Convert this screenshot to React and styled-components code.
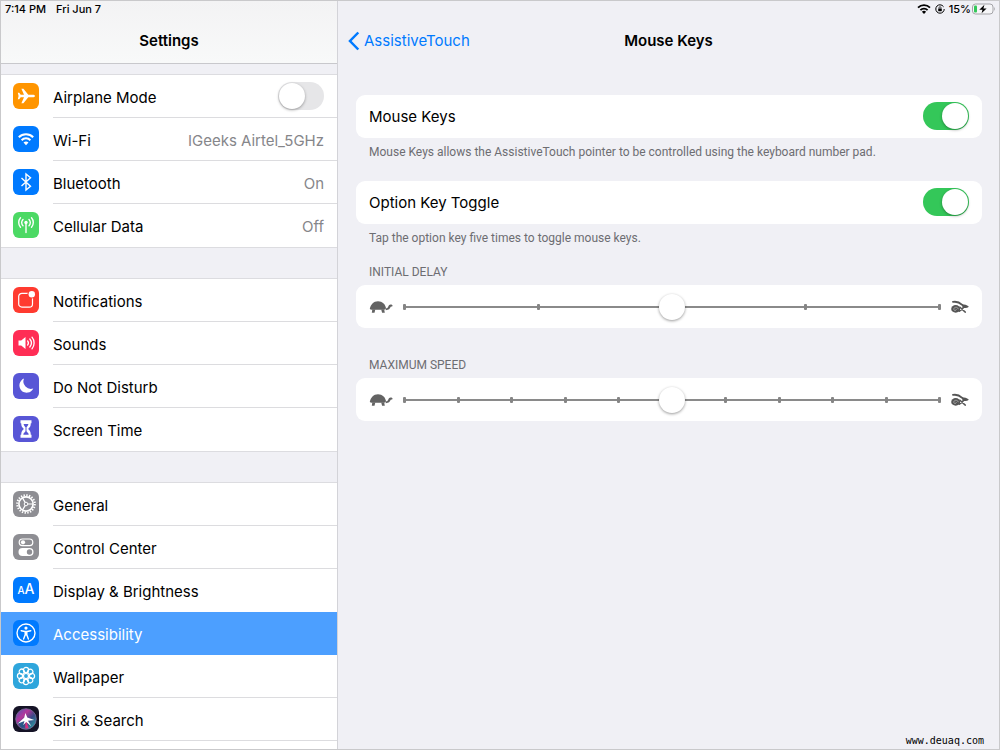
import React from "react";
import styled, { createGlobalStyle, css } from "styled-components";

const icons = {
  airplane: (
    <path
      fill="#fff"
      d="M22 13c0 .9-1.300 1.300-2.300 1.300h-4.400L10.400 20.300H8.400L11 14.300H7.700L6.200 16.300H4.800L5.600 13 4.800 9.700h1.400l1.500 2H11L8.400 5.700h2l4.900 6h4.400c1 0 2.300.4 2.300 1.300z"
    />
  ),
  wifi: (
    <g fill="none" stroke="#fff" strokeWidth="2">
      <path d="M5.800 11.300a10.200 10.200 0 0 1 14.400 0" />
      <path d="M8.600 14.200a6.200 6.200 0 0 1 8.800 0" />
      <path d="M13 19.200l-2.500-2.600a3.600 3.600 0 0 1 5 0z" fill="#fff" stroke="none" />
    </g>
  ),
  bluetooth: (
    <path
      fill="none"
      stroke="#fff"
      strokeWidth="1.400"
      d="M8.500 9l9 8.200L13 21V5l4.500 3.800-9 8.200"
    />
  ),
  cellular: (
    <g fill="none" stroke="#fff" strokeWidth="1.400" strokeLinecap="round">
      <circle cx="13" cy="10.500" r="1.700" fill="#fff" stroke="none" />
      <path d="M13 11v9.500M10 7.500a4.300 4.300 0 0 0 0 6.200M16 7.500a4.300 4.300 0 0 1 0 6.200M7.500 5.800a7.200 7.200 0 0 0 0 9.500M18.500 5.800a7.200 7.200 0 0 1 0 9.500" />
    </g>
  ),
  notifications: (
    <g>
      <rect x="5.700" y="6.300" width="13.800" height="13.800" rx="3.200" fill="none" stroke="#fff" strokeWidth="1.200" />
      <circle cx="18.800" cy="7.200" r="4.400" fill="#ff3b30" />
      <circle cx="18.800" cy="7.200" r="3.200" fill="#fff" />
    </g>
  ),
  sounds: (
    <g fill="none" stroke="#fff" strokeWidth="1.300" strokeLinecap="round">
      <path d="M5.500 10.500h2.700l4.300-3.500v12l-4.300-3.500H5.500z" fill="#fff" stroke="none" />
      <path d="M14.600 10.900a3.400 3.400 0 0 1 0 4.200M16.800 9a6.200 6.200 0 0 1 0 8M19 7.200a9 9 0 0 1 0 11.600" />
    </g>
  ),
  moon: (
    <path
      fill="#fff"
      d="M11 5.600a7.300 7.300 0 1 0 9.300 9.900A7.500 7.500 0 0 1 11 5.600z"
    />
  ),
  hourglass: (
    <g>
      <path
        fill="#fff"
        d="M7.500 4.300h11v3h-.7c0 2.900-1 4.200-2.700 5.700 1.700 1.500 2.700 2.800 2.700 5.700h.7v3H7.500v-3h.7c0-2.900 1-4.200 2.700-5.700-1.700-1.500-2.700-2.800-2.700-5.700h-.7z"
      />
      <path fill="#5856d6" d="M10.600 8h4.800c-.3 1.500-.9 2.300-1.900 3.300v4l2.100 2.500v1h-5.200v-1l2.100-2.500v-4C11.500 10.300 10.900 9.500 10.600 8z" />
    </g>
  ),
  gear: (
    <g fill="none" stroke="#fff">
      <circle cx="13" cy="13" r="8.800" strokeWidth="2" strokeDasharray="1.382 1.382" />
      <circle cx="13" cy="13" r="7.100" strokeWidth="1.700" />
      <circle cx="13" cy="13" r="1.800" strokeWidth="1" />
      <path strokeWidth="1.200" d="M14.800 13h5.200M12.100 11.400L9.500 6.900M12.100 14.600l-2.600 4.500" />
    </g>
  ),
  controls: (
    <g>
      <rect x="6.200" y="5" width="13.600" height="6.600" rx="3.300" fill="none" stroke="#fff" strokeWidth="1.200" />
      <circle cx="10" cy="8.300" r="2.100" fill="#fff" />
      <rect x="5.500" y="14" width="15" height="8" rx="4" fill="#fff" />
      <circle cx="16.500" cy="18" r="2.700" fill="#8e8e93" />
    </g>
  ),
  accessibility: (
    <g>
      <circle cx="13" cy="13" r="9" fill="none" stroke="#fff" strokeWidth="1.400" />
      <circle cx="13" cy="8.100" r="1.600" fill="#fff" />
      <path
        fill="none"
        stroke="#fff"
        strokeWidth="1.400"
        strokeLinecap="round"
        strokeLinejoin="round"
        d="M8.200 10.700l3.700.8h2.200l3.700-.8M12.200 11.500v3.200l-1.600 4.300M13.800 11.500v3.200l1.600 4.300M13 11.500v3.200"
      />
    </g>
  ),
  wallpaper: (
    <g fill="none" stroke="#fff" strokeWidth="1.200">
      <circle cx="13" cy="13" r="2.500" />
      {[0, 45, 90, 135, 180, 225, 270, 315].map((angle) => (
        <circle key={angle} cx="13" cy="7" r="2.600" transform={`rotate(${angle} 13 13)`} />
      ))}
    </g>
  ),
  siri: (
    <g>
      <defs>
        <linearGradient id="siriOrb" x1="0" y1="0" x2="1" y2="1">
          <stop offset="0" stopColor="#4a55b8" />
          <stop offset=".35" stopColor="#b5359b" />
          <stop offset=".6" stopColor="#3a4a86" />
          <stop offset="1" stopColor="#23b5a8" />
        </linearGradient>
      </defs>
      <circle cx="13" cy="13" r="10.300" fill="url(#siriOrb)" stroke="#7a6f9c" strokeWidth=".8" />
      <path fill="#1d5f86" d="M4.500 16.500l7-3.500-1.500 8.500a9 9 0 0 1-5.500-5z" opacity=".8" />
      <path fill="#d9307f" d="M12.500 13l3.200 9a9 9 0 0 1-3.500.5z" />
      <path fill="#fff" d="M4.500 17.800l6.700-6 1.200-4.800 1.900 4.600 7 2.400-6.300.8 3.300 5.500-5.100-4.300-3 3.300 1.300-4.300z" />
    </g>
  ),
};

const settingGroups = [
  [
    { id: "airplane", label: "Airplane Mode", color: "#ff9500", toggle: true },
    { id: "wifi", label: "Wi-Fi", color: "#007aff", value: "IGeeks Airtel_5GHz" },
    { id: "bluetooth", label: "Bluetooth", color: "#007aff", value: "On" },
    { id: "cellular", label: "Cellular Data", color: "#4cd964", value: "Off", noLine: true },
  ],
  [
    { id: "notifications", label: "Notifications", color: "#ff3b30" },
    { id: "sounds", label: "Sounds", color: "#ff2d55" },
    { id: "moon", label: "Do Not Disturb", color: "#5856d6" },
    { id: "hourglass", label: "Screen Time", color: "#5856d6", noLine: true },
  ],
  [
    { id: "gear", label: "General", color: "#8e8e93" },
    { id: "controls", label: "Control Center", color: "#8e8e93" },
    { id: "display", label: "Display & Brightness", color: "#007aff", noLine: true },
    { id: "accessibility", label: "Accessibility", color: "#007aff", active: true, noLine: true },
    { id: "wallpaper", label: "Wallpaper", color: "#2fa6dc" },
    { id: "siri", label: "Siri & Search", color: "#151326" },
  ],
];

const SettingIcon = ({ id, color }) => (
  <IconTile $color={color}>
    {id === "display" ? (
      <LetterIcon>
        <small>A</small>A
      </LetterIcon>
    ) : (
      <svg width="26" height="26" viewBox="0 0 26 26" aria-hidden="true">
        {icons[id]}
      </svg>
    )}
  </IconTile>
);

const SettingRow = ({ item }) => {
  const content = (
    <>
      <SettingIcon id={item.id} color={item.color} />
      <RowBody $noLine={item.noLine}>
        <RowText>{item.label}</RowText>
        {item.value && <RowText $muted>{item.value}</RowText>}
        {item.toggle && <Switch type="checkbox" role="switch" />}
      </RowBody>
    </>
  );

  if (item.toggle) {
    return <RowLabel>{content}</RowLabel>;
  }
  return (
    <RowLink href={`#${item.id}`} $active={item.active} aria-current={item.active ? "page" : undefined}>
      {content}
    </RowLink>
  );
};

const StepSlider = ({ id, label, steps }) => (
  <section>
    <SliderLabel htmlFor={id}>{label}</SliderLabel>
    <SliderCard>
      <svg width="24" height="14" viewBox="0 0 24 14" fill="#636363" aria-hidden="true">
        <path d="M.8 9C1.400 4.600 4.600 1.200 9 1.200s7.200 2.900 8 7c-.7 1-1.700 1.500-2.700 1.600H2.800C1.900 9.800 1.200 9.500.8 9z" />
        <path d="M16.600 8.600c1.500 0 2.300-.7 2.700-2 .4-1.400 1.200-2.100 2.300-2.100 1.300 0 2 .6 2.100 1.500-.4.600-1.100.8-2 .8-.7 2-2 3.200-4.900 3.400z" />
        <path d="M3.300 9.500h3l-.8 3.300H2.800zM12.200 9.500h3l.6 3.300h-2.700z" />
      </svg>
      <Track>
        <Ticks>
          {Array.from({ length: steps + 1 }, (_, i) => (
            <Tick key={i} />
          ))}
        </Ticks>
        <Range id={id} type="range" min="0" max={steps} defaultValue={steps / 2} />
      </Track>
      <svg width="18" height="14" viewBox="0 0 18 14" aria-hidden="true">
        <g fill="none" stroke="#555" strokeLinecap="round">
          <path strokeWidth="1.900" d="M2 1.900c3.200-.7 6.800.8 9.200 3" />
          <path strokeWidth="1.500" d="M8.200 11.300c2-.8 3.400-2.400 4.600-4.300M9 7.300c1.600 1.600 3.500 3.400 5.300 4.800" />
        </g>
        <path fill="#555" d="M10.800 4.200c2.400-.1 4.800.8 7 2.200-.5 1.300-2.300 1.400-5.300 1.500-1-.8-1.700-2-1.700-3.700z" />
        <ellipse cx="4.700" cy="8.900" rx="4.500" ry="3.800" fill="#555" />
        <path
          fill="none"
          stroke="#bdbdbd"
          strokeWidth=".7"
          d="M7.400 9.200C7 7.300 4.700 6.700 3.300 7.900c-1 1-.6 2.500.7 2.600 1.300 0 1.600-1.100.8-1.600"
        />
      </svg>
    </SliderCard>
  </section>
);

export default function App() {
  return (
    <>
      <GlobalStyle />
      <Screen>
        <Sidebar>
          <SidebarHeader>
            <StatusBar>
              <span>7:14 PM</span>
              <span>Fri Jun 7</span>
            </StatusBar>
            <Title>Settings</Title>
          </SidebarHeader>
          {settingGroups.map((group, index) => (
            <Group key={index}>
              {group.map((item) => (
                <li key={item.id}>
                  <SettingRow item={item} />
                </li>
              ))}
            </Group>
          ))}
        </Sidebar>

        <Main>
          <StatusBar $end>
            <svg width="14" height="10" viewBox="0 0 14 10" aria-hidden="true">
              <g fill="none" stroke="#000" strokeWidth="1.800">
                <path d="M1 3.700a8.500 8.500 0 0 1 12 0" />
                <path d="M3.400 6.100a5.100 5.100 0 0 1 7.200 0" />
              </g>
              <path d="M7 9.900L4.900 7.700a3 3 0 0 1 4.200 0z" />
            </svg>
            <svg width="10" height="10" viewBox="0 0 10 10" aria-hidden="true">
              <circle cx="5" cy="5" r="4.200" fill="none" stroke="#000" strokeWidth="1" strokeDasharray="23.400 3" />
              <rect x="3.200" y="4.500" width="3.600" height="2.700" rx=".4" />
              <path d="M4 4.600V3.700a1 1 0 0 1 2 0v.9" fill="none" stroke="#000" strokeWidth=".7" />
            </svg>
            <Charge>
              <span>15%</span>
              <svg width="24" height="12" viewBox="0 0 24 12" aria-hidden="true">
                <rect x=".5" y="1" width="20.500" height="10" rx="3" fill="#f6f6f8" stroke="#a4a4a8" />
                <path d="M22.200 4.300c1 .3 1 3.100 0 3.400z" fill="#a4a4a8" />
                <rect x="2" y="2.500" width="3" height="7" rx="1" fill="#34c759" />
                <path d="M12.400 1.800L7.300 6.700h3.200L9.600 10.300l5-4.900h-3.200z" />
              </svg>
            </Charge>
          </StatusBar>
          <NavBar>
            <BackLink href="#accessibility">
              <svg width="12" height="20" viewBox="0 0 12 20" aria-hidden="true">
                <path d="M10.300 1.500L2 10l8.300 8.500" fill="none" stroke="#007aff" strokeWidth="2.500" />
              </svg>
              AssistiveTouch
            </BackLink>
            <Title>Mouse Keys</Title>
          </NavBar>

          <Panel>
            <SwitchCard>
              <label htmlFor="mouse-keys">Mouse Keys</label>
              <Switch id="mouse-keys" type="checkbox" role="switch" defaultChecked />
            </SwitchCard>
            <Note>Mouse Keys allows the AssistiveTouch pointer to be controlled using the keyboard number pad.</Note>
            <SwitchCard>
              <label htmlFor="option-toggle">Option Key Toggle</label>
              <Switch id="option-toggle" type="checkbox" role="switch" defaultChecked />
            </SwitchCard>
            <Note $tight>Tap the option key five times to toggle mouse keys.</Note>
            <Sliders>
              <StepSlider id="initial-delay" label="INITIAL DELAY" steps={4} />
              <StepSlider id="maximum-speed" label="MAXIMUM SPEED" steps={10} />
            </Sliders>
          </Panel>
          <Watermark>www.deuaq.com</Watermark>
        </Main>
      </Screen>
    </>
  );
}

const GlobalStyle = createGlobalStyle`
  * {
    box-sizing: border-box;
  }

  body {
    margin: 0;
    background: #f0f0f5;
    color: #000;
    font-family: Inter, "Liberation Sans", sans-serif;
    font-size: 15px;
    line-height: 20px;
  }
`;

const Screen = styled.div`
  display: flex;
  min-height: 100vh;
  border: 1px solid #c9c9cb;
`;

const Sidebar = styled.nav`
  display: flex;
  flex-direction: column;
  gap: 32px;
  flex: 0 0 337px;
  border-right: 1px solid #d3d3d8;
`;

const SidebarHeader = styled.header`
  height: 63px;
  margin-bottom: -21px;
  border-bottom: 1px solid #c8c8cc;
  background: linear-gradient(#f3f3f4, #f8f9f9);
`;

const StatusBar = styled.div`
  display: flex;
  align-items: center;
  justify-content: ${(props) => (props.$end ? "flex-end" : "flex-start")};
  gap: ${(props) => (props.$end ? "4px" : "10px")};
  height: 16px;
  padding: 0 ${(props) => (props.$end ? "3px" : "4px")};
  font-size: 11px;
  font-weight: 500;
  line-height: 16px;
`;

const Charge = styled.span`
  display: flex;
  align-items: center;
  gap: 1px;
`;

const Title = styled.h1`
  margin: 0;
  padding: 14px 0;
  font-size: 15px;
  font-weight: 600;
  line-height: 20px;
  text-align: center;
`;

const Group = styled.ul`
  margin: 0;
  padding: 0;
  list-style: none;
  background: #fff;
  box-shadow: 0 -1px 0 #dcdce0, 0 1px 0 #dcdce0;

  &:last-child {
    flex: 1;
    box-shadow: 0 -1px 0 #dcdce0;
  }
`;

const rowStyle = css`
  display: flex;
  align-items: center;
  gap: 14px;
  height: 43px;
  padding-left: 12px;
`;

const RowLabel = styled.label`
  ${rowStyle}
`;

const RowLink = styled.a`
  ${rowStyle}
  color: ${(props) => (props.$active ? "#fff" : "#000")};
  background: ${(props) => (props.$active ? "#4c9fff" : "transparent")};
  text-decoration: none;
`;

const IconTile = styled.span`
  display: flex;
  align-items: center;
  justify-content: center;
  flex: none;
  width: 26px;
  height: 26px;
  margin-bottom: 2px;
  border-radius: 6px;
  background: ${(props) => props.$color};
  overflow: hidden;
`;

const LetterIcon = styled.span`
  color: #fff;
  font-size: 14px;
  font-weight: 500;
  line-height: 26px;

  small {
    font-size: 10px;
  }
`;

const RowBody = styled.span`
  display: flex;
  align-items: center;
  justify-content: space-between;
  flex: 1;
  align-self: stretch;
  padding-right: 13px;
  border-bottom: 1px solid ${(props) => (props.$noLine ? "transparent" : "#dcdcdf")};
`;

const RowText = styled.span`
  padding-top: 4px;
  color: ${(props) => (props.$muted ? "#86868a" : "inherit")};
`;

const Switch = styled.input`
  appearance: none;
  display: flex;
  flex: none;
  width: 46px;
  height: 28px;
  margin: 0;
  padding: 1px;
  border-radius: 14px;
  background: #e6e6e8;

  &::before {
    content: "";
    width: 26px;
    height: 26px;
    border-radius: 50%;
    background: #fff;
    box-shadow: 0 1px 3px rgba(0, 0, 0, 0.35);
  }

  &:checked {
    justify-content: flex-end;
    background: #34c759;
  }
`;

const Main = styled.main`
  display: flex;
  flex-direction: column;
  flex: 1;
  min-width: 0;
`;

const NavBar = styled.header`
  display: grid;
  grid-template-columns: 1fr auto 1fr;
  align-items: center;
  height: 47px;
  padding: 0 10px;
`;

const BackLink = styled.a`
  display: flex;
  align-items: center;
  gap: 4px;
  color: #007aff;
  text-decoration: none;
`;

const Panel = styled.div`
  padding: 31px 17px 0 18px;
`;

const Card = styled.div`
  display: flex;
  align-items: center;
  justify-content: space-between;
  height: 43px;
  padding: 0 13px;
  border-radius: 9px;
  background: #fff;
`;

const SwitchCard = styled(Card)`
  padding-bottom: 1px;

  label {
    padding-top: 2px;
  }
`;

const Note = styled.p`
  margin: 0;
  padding: 6px 13px ${(props) => (props.$tight ? "18px" : "21px")};
  color: #6d6d72;
  font-family: Roboto, "Liberation Sans", sans-serif;
  font-size: 12px;
  line-height: 16px;
`;

const Sliders = styled.div`
  display: flex;
  flex-direction: column;
  gap: 29px;
`;

const SliderLabel = styled.label`
  display: block;
  padding: 0 13px 5px;
  color: #6d6d72;
  font-family: Roboto, "Liberation Sans", sans-serif;
  font-size: 12px;
  line-height: 16px;
`;

const SliderCard = styled(Card)`
  gap: 10px;
`;

const Track = styled.div`
  display: grid;
  flex: 1;
  align-items: center;

  > * {
    grid-area: 1 / 1;
  }
`;

const Ticks = styled.div`
  display: flex;
  align-items: center;
  justify-content: space-between;
  height: 6px;
  background: linear-gradient(#8a8a8a, #8a8a8a) center / 100% 2px no-repeat;
`;

const Tick = styled.span`
  width: 3px;
  height: 6px;
  border-radius: 1px;
  background: #858585;
`;

const thumbStyle = css`
  width: 26px;
  height: 26px;
  border: 0;
  border-radius: 50%;
  background: #fff;
  box-shadow: 0 1px 3px rgba(0, 0, 0, 0.4);
`;

const Range = styled.input`
  appearance: none;
  height: 26px;
  margin: 0 -12px;
  background: transparent;

  &::-webkit-slider-thumb {
    appearance: none;
    ${thumbStyle}
  }

  &::-moz-range-thumb {
    ${thumbStyle}
  }
`;

const Watermark = styled.footer`
  margin-top: auto;
  padding: 0 15px 0 0;
  font-family: "DejaVu Sans Mono", monospace;
  font-size: 10px;
  line-height: 16px;
  text-align: right;
`;
